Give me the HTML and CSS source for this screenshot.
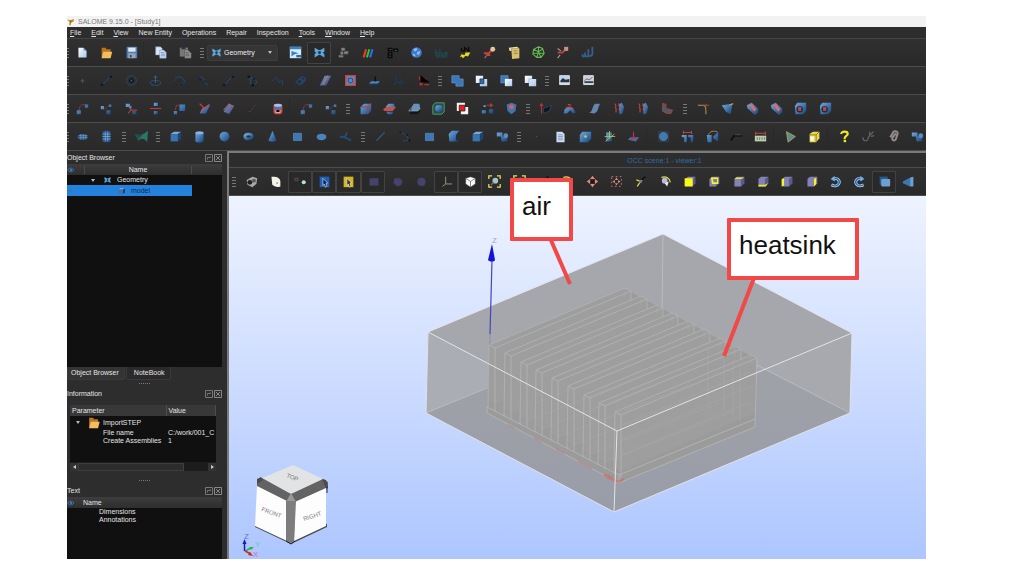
FILE: index.html
```html
<!DOCTYPE html>
<html lang="en">
<head>
<meta charset="utf-8">
<title>SALOME 9.15.0 - [Study1]</title>
<link rel="stylesheet" href="styles.css">
</head>
<body>
<svg class="sprite" aria-hidden="true">
<defs>
<linearGradient id="b" x1="0" y1="0" x2="1" y2="1"><stop offset="0" stop-color="#7aa6d4"/><stop offset=".5" stop-color="#3f79b6"/><stop offset="1" stop-color="#1c426e"/></linearGradient>
<linearGradient id="w" x1="0" y1="0" x2="1" y2="1"><stop offset="0" stop-color="#fff"/><stop offset="1" stop-color="#a9c8ea"/></linearGradient>
</defs>
<symbol id="new" viewBox="0 0 16 16"><path fill="url(#w)" d="M3 2h6l4 4v8H3z"/><path fill="#7fb0e8" d="M9 2l4 4H9z"/></symbol>
<symbol id="open" viewBox="0 0 16 16"><path fill="#b9741c" d="M2 2h5l1 2h5v10H2z"/><path fill="#f3bd62" d="M4 7h11l-2 8H2z"/></symbol>
<symbol id="save" viewBox="0 0 16 16"><path fill="#4c7fb8" d="M2 1h13v14H2z"/><path fill="#dfe8f2" d="M4 2h9v5H4z"/><path fill="#9aa4ae" d="M4 9h9v6H4z"/><path fill="#27456b" d="M6 11h2v3H6z"/></symbol>
<symbol id="copy" viewBox="0 0 16 16"><path fill="#d7e4f4" stroke="#7894b8" stroke-width=".6" d="M2 1h6l2 2v8H2z"/><path fill="#c9daf0" stroke="#7894b8" stroke-width=".6" d="M7 5h5l3 3v7H7z"/><path stroke="#6e93c0" d="M8.500 8h4m-4 2h5m-5 2h5"/></symbol>
<symbol id="paste" viewBox="0 0 16 16"><path fill="#777" d="M1 2h10v11H1z"/><path fill="#333" d="M3 1h5v3H3z"/><path fill="#999" stroke="#444" stroke-width=".6" d="M7 5h4l4 4v6H7z"/><path stroke="#555" d="M8 8h4m-4 2h5m-5 2h5"/></symbol>
<symbol id="geom" viewBox="0 0 16 16"><path fill="#5fa8d4" d="M2 2l5 3h2l5-3v5l-2 1 2 2v4l-5-3H7l-5 3v-4l2-2-2-1z"/><path fill="#16466c" d="M7 6h2l1 2-1 2H7L6 8z"/></symbol>
<symbol id="shaper" viewBox="0 0 16 16"><path fill="#d7ecfb" d="M1 1h14v14H1z"/><path fill="#3583c7" d="M1 1h14v3H1zM3 6l9 3-5 1-4 3z"/><path fill="#246ba8" d="M9 11h6v3H9z"/></symbol>
<symbol id="cubes" viewBox="0 0 16 16"><path fill="#858585" stroke="#333" stroke-width=".7" d="M5 2h5v5H5zM4 6h4v5H4zM8 6h6v4H8zM2 11h6v3H2z"/></symbol>
<symbol id="rgb" viewBox="0 0 16 16"><path stroke="#f33" stroke-width="2.500" d="M2 14l3-10"/><path stroke="#2c2" stroke-width="2.500" d="M6 14l3-10"/><path stroke="#36f" stroke-width="2.500" d="M10 14l3-10"/></symbol>
<symbol id="yacs" viewBox="0 0 16 16"><path fill="#0b0b0b" d="M2 2h6v4H2zM9 3h6v4H9zM2 7h6v8H2z"/><path fill="#933" d="M4 4h3v1H4zM4 9h2v1H4z"/><path fill="#285" d="M4 12h2v1H4zM11 5h2v1h-2z"/></symbol>
<symbol id="globe" viewBox="0 0 16 16"><circle cx="8" cy="8" r="6.500" fill="#3c78c8"/><path fill="#8ebce8" d="M4 4l4-2 1 3-3 2zM9 7l4-1-2 5-3-1zM3 9l3 1 1 3-3-1z"/></symbol>
<symbol id="blue" viewBox="0 0 16 16"><path fill="none" stroke="#1b5762" d="M1 4v8h3V8H1M6 4v8m2-4v4h3V8m4 4h-2V8h2v2h-2M1 13.500h14"/></symbol>
<symbol id="hex" viewBox="0 0 16 16"><path fill="none" stroke="#0a0a0a" stroke-width="1.500" d="M3 2v4h4V2l5 4V1"/><path fill="#e4dc1c" d="M1 14l2-4 4 1 1-3h6l-3 5-3-1-3 3-2-2z"/></symbol>
<symbol id="pipe" viewBox="0 0 16 16"><path fill="none" stroke="#777" stroke-width="1.500" d="M2 15l3-4"/><path fill="none" stroke="#c9403a" stroke-width="2.400" d="M1 9h6l4-4M4 11h5"/><circle cx="12" cy="4" r="3" fill="#e8c49a"/></symbol>
<symbol id="book" viewBox="0 0 16 16"><path fill="#d8c070" d="M4 3h10v12l-9 1z"/><path fill="#f2e3a4" d="M1 2l10-1 3 2H4v3H2z"/><path stroke="#8d7833" d="M7 6h4m-4 3h5"/></symbol>
<symbol id="mesh" viewBox="0 0 16 16"><path fill="#1c3a18" stroke="#6fb65c" stroke-width="1.300" d="M8 1l5 2 2 6-4 5H6L1 10l1-6zM8 1v6l5-3M2 4l6 3-2 7m2-7l3 7M1 9h13"/></symbol>
<symbol id="pipe2" viewBox="0 0 16 16"><path fill="none" stroke="#999" stroke-width="1.500" d="M2 3l4 3M2 15l3-4"/><path fill="none" stroke="#b9403c" stroke-width="2.200" d="M2 8h6l4-4"/><path fill="#c9907e" d="M10 1h5v5h-5z"/></symbol>
<symbol id="bars" viewBox="0 0 16 16"><path fill="none" stroke="#33608f" stroke-width="2.200" d="M2 10v2q1 2 3 0V8m1 4q2 2 3 0V4m1 8q3 1 4-2V1"/></symbol>
<symbol id="pt" viewBox="0 0 16 16"><path stroke="#4d6175" d="M8 6v5M5.500 8.500h5"/></symbol>
<symbol id="ln" viewBox="0 0 16 16"><path stroke="#244a74" stroke-width="1.200" d="M3 13l10-10"/><path fill="#0d1a2a" d="M1 12h3v3H1zM12 2h3v3h-3z"/></symbol>
<symbol id="circ" viewBox="0 0 16 16"><circle cx="8" cy="8" r="6" fill="none" stroke="#24507c"/><path stroke="#0b1624" stroke-width="2" d="M8 5v6M5 8h6"/><circle cx="8" cy="8" r="1" fill="#3a6da5"/></symbol>
<symbol id="ell" viewBox="0 0 16 16"><ellipse cx="8" cy="11" rx="6.500" ry="3" fill="none" stroke="#29568a"/><path fill="none" stroke="#3b6696" d="M8 11V3M6 5l2-3 2 3"/></symbol>
<symbol id="arc" viewBox="0 0 16 16"><path fill="none" stroke="#244f80" d="M2 7c4-6 12-4 12 3"/><path fill="#0c1826" stroke="#29568a" stroke-width=".5" d="M1 6h2v2H1zM13 10h2v2h-2zM8 12h3v3H8z"/></symbol>
<symbol id="crv" viewBox="0 0 16 16"><path fill="none" stroke="#29568a" d="M2 6c4-5 5 0 6 3s3 6 6 2"/><path fill="#13263d" d="M1 5h3v3H1zM7 8h2v2H7zM13 10h2v2h-2z"/></symbol>
<symbol id="poly" viewBox="0 0 16 16"><path fill="none" stroke="#29568a" d="M3 4l7 2 4 4-5 4-4-3 1-3z"/><path fill="#0b1624" d="M2 2h3v3H2zM9 5h2v2H9zM7 12h3v3H7z"/></symbol>
<symbol id="zig" viewBox="0 0 16 16"><path fill="none" stroke="#23466d" stroke-width="1.200" d="M1 9l5-5 4 6 4-2v6"/></symbol>
<symbol id="hatch" viewBox="0 0 16 16"><path fill="none" stroke="#23466d" stroke-width="1.500" d="M1 10l8-7 4 2-8 8zM4 6l8 3M6 13l7-6M7 4l3 8"/></symbol>
<symbol id="plate" viewBox="0 0 16 16"><path fill="url(#b)" d="M1 14l6-12h8L9 14z"/><path stroke="#d06060" stroke-width="2" d="M5 13l6-11"/></symbol>
<symbol id="redsq" viewBox="0 0 16 16"><path fill="#5a89bb" stroke="#d83c3c" stroke-width="1.500" d="M2 2h12v12H2z"/><circle cx="8" cy="8" r="3" fill="none" stroke="#1c3e66"/><path stroke="#d83c3c" d="M2 5h3m6 7h3"/></symbol>
<symbol id="plane" viewBox="0 0 16 16"><path fill="#4b86c0" d="M1 12l3-3h11l-3 3z"/><path fill="#183453" d="M1 12h11l3-3v2l-3 3H1z"/><path fill="#111" d="M8 3h2v6H8z"/></symbol>
<symbol id="axes" viewBox="0 0 16 16"><path fill="none" stroke="#1e3a58" stroke-width="1.500" d="M5 1v9h10M5 10l-3 4M10 5v9"/></symbol>
<symbol id="raxes" viewBox="0 0 16 16"><path fill="none" stroke="#c22a2a" stroke-width="1.500" d="M3 3v4M4 13l7-7M9 13h6"/><path fill="#c22a2a" d="M3 11h4v3H3z"/><path stroke="#0a0a0a" d="M5 2v8h10"/></symbol>
<symbol id="ov1" viewBox="0 0 16 16"><path fill="#3b78b8" stroke="#7cacdf" stroke-width=".6" d="M1 2h9v4h5v9H6v-4H1z"/></symbol>
<symbol id="ov2" viewBox="0 0 16 16"><path fill="url(#w)" d="M1 2h9v4h5v9H6v-4H1z"/><path fill="#2f6cab" stroke="#123" stroke-width=".7" d="M6 6h5v6H6z"/></symbol>
<symbol id="ov3" viewBox="0 0 16 16"><path fill="#3b78b8" stroke="#7cacdf" stroke-width=".6" d="M1 2h9v9H1z"/><path fill="url(#w)" d="M6 6h9v9H6z"/></symbol>
<symbol id="ov4" viewBox="0 0 16 16"><path fill="url(#w)" d="M1 2h9v4h5v9H6v-4H1z"/><path fill="none" stroke="#8ba2bd" stroke-width=".7" d="M6 11V6h4"/></symbol>
<symbol id="pic" viewBox="0 0 16 16"><path fill="#b9d4ee" stroke="#eee" d="M2 2h12v11H2z"/><path fill="#27333f" d="M3 8l3-3 3 2 5-1v4H3z"/><path fill="#ddd" d="M2 11h12v2H2z"/></symbol>
<symbol id="pic2" viewBox="0 0 16 16"><path fill="#c3d4e6" stroke="#eee" d="M2 2h12v11H2z"/><path fill="none" stroke="#a83030" d="M3 8l3-2 3 1 4-3"/><path fill="#27333f" d="M3 9h11v2H3z"/></symbol>
<symbol id="t1" viewBox="0 0 16 16"><path fill="none" stroke="#a83a3a" d="M4 10c0-5 2-7 7-7"/><path fill="url(#b)" d="M1 10h5v5H1zM11 3h4v4h-4z"/></symbol>
<symbol id="t2" viewBox="0 0 16 16"><path stroke="#a83a3a" d="M6 9l5-5" stroke-dasharray="2 1"/><path fill="url(#b)" d="M1 5h4v4H1zM8 10h5v5H8zM11 3h3v3h-3z"/></symbol>
<symbol id="t3" viewBox="0 0 16 16"><path fill="none" stroke="#b83a3a" stroke-width="1.300" d="M7 4v6h8M7 10l-3 4"/><path fill="url(#b)" d="M1 2h5v4H1zM5 5h3v3H5zM9 11h5v4H9z"/></symbol>
<symbol id="t4" viewBox="0 0 16 16"><path stroke="#b83a3a" stroke-width="1.500" d="M1 8h14"/><path fill="url(#b)" d="M6 1h5v4H6zM6 11h5v4H6z"/></symbol>
<symbol id="t5" viewBox="0 0 16 16"><path fill="url(#b)" d="M1 11h4v4H1zM8 3h7v8H8z"/><path fill="none" stroke="#a83a3a" d="M3 10l1-6h5"/></symbol>
<symbol id="t6" viewBox="0 0 16 16"><path fill="url(#b)" d="M2 14l3-6 10-5-5 11z"/><path fill="none" stroke="#c84848" stroke-width="1.500" d="M2 2l5 5-2 6M7 8l7-5"/></symbol>
<symbol id="t7" viewBox="0 0 16 16"><path fill="url(#b)" d="M2 12l7-10 6 3-6 10z"/><path fill="none" stroke="#c84848" stroke-width="1.500" d="M2 10l7-8M7 13l7-9"/></symbol>
<symbol id="t8" viewBox="0 0 16 16"><path fill="none" stroke="#1a2c40" stroke-width="2" d="M3 13c7 0 3-9 10-9"/><path fill="none" stroke="#7c3434" d="M3 12c7 0 3-8 10-8"/></symbol>
<symbol id="t9" viewBox="0 0 16 16"><rect x="3" y="2" width="11" height="13" rx="3" fill="#d84848"/><ellipse cx="8.500" cy="4" rx="5" ry="2" fill="#9fc6ec"/><path fill="#3c79b8" d="M4 6h9v3H4z"/><path stroke="#ecd5d5" d="M6 10v3h5v-3"/></symbol>
<symbol id="s1" viewBox="0 0 16 16"><path fill="url(#b)" d="M2 6l4-4h9v9l-4 4H2z"/><path fill="none" stroke="#b34040" stroke-width="1.300" d="M2 6h9v8M11 6l4-4"/></symbol>
<symbol id="s2" viewBox="0 0 16 16"><path fill="url(#b)" d="M4 5l3-3h6l2 4H4zM4 12h9l-2 3H6z"/><path fill="#c9504a" d="M0 9l4-3h12l-4 5H2z"/></symbol>
<symbol id="s3" viewBox="0 0 16 16"><path fill="#6990b8" d="M4 7l3-5h7l1 6-3 3H4z"/><path fill="none" stroke="#8fa8c2" d="M1 11l2-3m-2 3h11l3-3"/><path fill="#101820" d="M2 12h10l3-2v2l-3 3H3z"/></symbol>
<symbol id="s4" viewBox="0 0 16 16"><path fill="#2c4d46" stroke="#4a9c70" stroke-width="1.200" d="M1 4l3-3h11v11l-3 3H1z"/><rect x="4" y="4" width="9" height="8" rx="3" fill="url(#b)"/></symbol>
<symbol id="s5" viewBox="0 0 16 16"><path fill="#f2f2f2" d="M1 1h10v10H1zM6 6h9v9H6z"/><path fill="#f01818" stroke="#222" d="M4 4h7v7H4z"/></symbol>
<symbol id="s6" viewBox="0 0 16 16"><path fill="url(#b)" d="M1 10h5v4H1zM10 9h5v5h-5zM3 4h3v2H3z"/><path fill="none" stroke="#a83a3a" stroke-width="1.500" d="M7 4h6m-2-2l3 2-3 2"/></symbol>
<symbol id="s7" viewBox="0 0 16 16"><path fill="#3576bd" d="M2 3l6-2 6 2-1 8-5 4-5-4z"/><circle cx="8" cy="6" r="3" fill="#e85a4a"/></symbol>
<symbol id="c1" viewBox="0 0 16 16"><path fill="none" stroke="#b33" stroke-width="1.300" d="M3 2v12m-2-9l2-3 2 3"/><path fill="#101820" stroke="#395d85" stroke-width=".7" d="M5 8l10-4-2 7-7 3z"/></symbol>
<symbol id="c2" viewBox="0 0 16 16"><path fill="url(#b)" d="M1 14l1-5 6-3 5 3 3 4-4 1-3-4-4 4z"/><path fill="none" stroke="#c84848" stroke-width="1.500" d="M3 8c3-2 7-2 10 1M6 3l4 1"/></symbol>
<symbol id="c3" viewBox="0 0 16 16"><path fill="#6485ae" d="M1 13c5 0 4-9 8-11h6c-3 4-2 11-8 12z"/></symbol>
<symbol id="c4" viewBox="0 0 16 16"><path fill="url(#b)" d="M7 4c4 0 0 5 2 6v5l4-1 2-8-3-5z"/><path fill="none" stroke="#c84848" stroke-width="1.300" d="M3 2c4 2 0 4 2 6v5M8 2c4 2 1 5 1 9"/></symbol>
<symbol id="c5" viewBox="0 0 16 16"><path fill="#2d6871" stroke="#a33b3b" stroke-width="1.500" d="M2 2l4 1v5l8 2-2 4H7l-5-3z"/></symbol>
<symbol id="f1" viewBox="0 0 16 16"><path fill="none" stroke="#b0934a" stroke-width="1.300" d="M1 4h6c4 0 4 4 4 11"/><path fill="none" stroke="#aa5930" d="M6 4h9M11 2v6"/></symbol>
<symbol id="f2" viewBox="0 0 16 16"><path fill="url(#b)" d="M1 4l13-2-2 13-6-3z"/><path stroke="#d09050" stroke-width="1.500" d="M10 4l5-2"/></symbol>
<symbol id="f3" viewBox="0 0 16 16"><path fill="url(#b)" d="M1 4l6-3 8 7v5l-4 3-9-8z"/><path fill="#dd6b6b" d="M4 4l3-2 6 7-3 3z"/></symbol>
<symbol id="f4" viewBox="0 0 16 16"><path fill="url(#b)" d="M1 5l3-4h11v10l-4 4H2z"/><circle cx="7" cy="9" r="4" fill="#1e2c3e"/><path fill="#b74848" d="M5 6h4v5H5z"/></symbol>
<symbol id="m1" viewBox="0 0 16 16"><path fill="#234a75" d="M1 9l3-4h9l2 4-3 3H4z"/><path stroke="#7fa9d4" stroke-width=".8" d="M3 7h11M3 9.500h11M6 5v7m3-7v7m3-6v5"/></symbol>
<symbol id="m2" viewBox="0 0 16 16"><rect x="3" y="1" width="10" height="14" rx="2" fill="#275489"/><path stroke="#91b8df" stroke-width=".8" d="M3 5h10M3 8h10M3 11h10M6.500 2v12m3-12v12"/></symbol>
<symbol id="surf" viewBox="0 0 16 16"><path fill="#2a7767" d="M0 5c6 3 10 1 16-4l-1 14c-3-4-6-6-11-2z"/><path fill="#1b5148" d="M0 5l4 7 5-6z"/></symbol>
<symbol id="box" viewBox="0 0 16 16"><path fill="#7ea8d4" d="M2 5l4-3h9l-4 3z"/><path fill="#3b73ae" d="M2 5h9v9H2z"/><path fill="#1d4370" d="M11 5l4-3v9l-4 3z"/></symbol>
<symbol id="cyl" viewBox="0 0 16 16"><path fill="url(#b)" d="M3 3v11c3 2 7 2 10 0V3z"/><ellipse cx="8" cy="3.500" rx="5" ry="2" fill="#8ab3db"/></symbol>
<symbol id="sph" viewBox="0 0 16 16"><circle cx="8" cy="8" r="6" fill="url(#b)"/></symbol>
<symbol id="tor" viewBox="0 0 16 16"><ellipse cx="8" cy="8" rx="4.500" ry="3" fill="none" stroke="url(#b)" stroke-width="3.500"/></symbol>
<symbol id="cone" viewBox="0 0 16 16"><path fill="url(#b)" d="M8 1l5 12c-3 2-7 2-10 0z"/></symbol>
<symbol id="sq" viewBox="0 0 16 16"><path fill="#3c78b5" stroke="#6ba2d8" stroke-width=".6" d="M3 4h10v9H3z"/></symbol>
<symbol id="disk" viewBox="0 0 16 16"><ellipse cx="8" cy="8.500" rx="6" ry="4" fill="#4a82bf"/></symbol>
<symbol id="tee" viewBox="0 0 16 16"><path fill="none" stroke="#1f4f7c" stroke-width="2.200" d="M1 8l6 1 8 4M7 9l3-6"/></symbol>
<symbol id="seg" viewBox="0 0 16 16"><path stroke="#285f94" stroke-width="1.500" d="M3 13L13 3"/></symbol>
<symbol id="wire" viewBox="0 0 16 16"><path fill="none" stroke="#285070" d="M3 3l7 3 3 6-7 2"/><path fill="#0b1624" d="M2 2h2v2H2zM10 5h2v2h-2zM13 11h2v3h-2z"/></symbol>
<symbol id="shell" viewBox="0 0 16 16"><path fill="url(#b)" d="M2 5l4-4h9l-3 4v7l3 2H3z"/><path fill="#1a2f48" d="M11 6l3-2-2 7 3 2h-4z"/></symbol>
<symbol id="comp" viewBox="0 0 16 16"><path fill="url(#b)" d="M1 3h7v5H1zM6 8h8v6H7z"/><circle cx="12" cy="7" r="3" fill="#5b8dc0"/></symbol>
<symbol id="dot" viewBox="0 0 16 16"><circle cx="8" cy="8" r="1" fill="#28588a"/></symbol>
<symbol id="doc" viewBox="0 0 16 16"><path fill="#cfdcf0" d="M3 2h7l3 3v10H3z"/><path stroke="#5a84b5" stroke-width=".8" d="M5 6h6m-6 2h6m-6 2h6m-6 2h6"/></symbol>
<symbol id="boxp" viewBox="0 0 16 16"><path fill="url(#b)" d="M1 6l3-4h11v9l-4 4H1z"/><circle cx="8" cy="8" r="1.500" fill="#d8d23a"/></symbol>
<symbol id="gaxes" viewBox="0 0 16 16"><path fill="url(#b)" d="M4 3h7v11H4z"/><path fill="none" stroke="#b6c744" d="M8 1v9M2 8h13M3 14l11-9"/></symbol>
<symbol id="vec" viewBox="0 0 16 16"><path fill="#3b73a8" d="M1 12l3-3h11l-4 5z"/><path fill="none" stroke="#c93048" stroke-width="1.400" d="M8 11V2m-4 8h8"/></symbol>
<symbol id="bnd" viewBox="0 0 16 16"><path fill="none" stroke="#3f4b57" stroke-width=".8" d="M2 2h12v12H2z"/><circle cx="8" cy="8" r="5.500" fill="#4079b4"/></symbol>
<symbol id="dist" viewBox="0 0 16 16"><path fill="url(#b)" d="M1 6h6v9H4V9H1zM9 6h6v9h-3V9H9z"/><path stroke="#b94545" stroke-width="1.300" d="M3 3h10M3 1v4m10-4v4"/></symbol>
<symbol id="ang" viewBox="0 0 16 16"><path fill="url(#b)" d="M1 6h6v9H2zM9 8l6-6v12l-6-4z"/><path fill="none" stroke="#c09440" d="M3 6c2-5 6-5 11-4"/></symbol>
<symbol id="step" viewBox="0 0 16 16"><path fill="none" stroke="#0c0c0c" stroke-width="2" d="M1 13l4-6h10"/><path stroke="#555" d="M6 6h8"/></symbol>
<symbol id="rule" viewBox="0 0 16 16"><path stroke="#c94545" stroke-width="1.300" d="M2 4h12M2 2v4m12-4v4"/><path fill="#bccfae" d="M1 7h14v7H1z"/><path stroke="#4b6a3c" d="M4 9v3m3-3v3m3-3v3m3-3v3"/></symbol>
<symbol id="play" viewBox="0 0 16 16"><path fill="#668c78" stroke="#c0c266" stroke-width=".8" d="M3 2l11 6-9 7z"/><path fill="#5c87b8" d="M5 8h6l-6 5z"/></symbol>
<symbol id="ycube" viewBox="0 0 16 16"><path fill="#e2de50" d="M2 5l4-3h8v8l-4 5H2z"/><path fill="#fff" d="M3 8h4v5H3z"/><path fill="none" stroke="#7b3b20" stroke-width=".8" d="M2 6h8v9M10 6l4-4"/></symbol>
<symbol id="help" viewBox="0 0 16 16"><path fill="none" stroke="#f0ea20" stroke-width="2.600" d="M4 5c0-4 8-4 8 0 0 2-4 2-4 6"/><path fill="#f0ea20" d="M7 12h3v3H7z"/></symbol>
<symbol id="wr" viewBox="0 0 16 16"><path fill="none" stroke="#666" stroke-width="1.500" d="M14 2l-7 8M10 2l-1 4M15 7l-4 1M1 9c0 5 5 6 7 1"/></symbol>
<symbol id="clip" viewBox="0 0 16 16"><path fill="none" stroke="#928a88" stroke-width="2.500" d="M11 4L7 9c-2 3 2 6 4 2l2-6c1-4-5-5-6-1l-3 5"/></symbol>
<symbol id="cam" viewBox="0 0 16 16"><path fill="#a8a8a8" d="M2 6l7-4 6 2-1 7-5 4-6-3z"/><circle cx="6" cy="9" r="3" fill="#222"/><path fill="#555" d="M9 5h4v4H9z"/></symbol>
<symbol id="blob" viewBox="0 0 16 16"><path fill="#f3f1e8" d="M3 2h4q7 1 7 6v6q-6 2-10-2z"/><circle cx="10" cy="10" r="1" fill="#888"/></symbol>
<symbol id="hl" viewBox="0 0 16 16"><path fill="none" stroke="#666" stroke-width=".8" d="M1 4h4v3H1z"/><circle cx="12" cy="9" r="2.500" fill="#b6dfd6"/></symbol>
<symbol id="selb" viewBox="0 0 16 16"><path fill="#1e5fbb" d="M2 2h12v13H2z"/><path fill="#102040" stroke="#d7e4fb" stroke-width=".8" d="M6 4l6 6h-2l1 4-2 1-1-4-2 2z"/></symbol>
<symbol id="sely" viewBox="0 0 16 16"><path fill="#d4b51e" d="M2 2h12v13H2z"/><path fill="#263052" stroke="#fff4c2" stroke-width=".8" d="M6 4l6 6h-2l1 4-2 1-1-4-2 2z"/></symbol>
<symbol id="prec" viewBox="0 0 16 16"><path fill="#45436a" d="M3 4h11v9H3z"/></symbol>
<symbol id="ppol" viewBox="0 0 16 16"><path fill="#45436a" d="M4 4h7l3 3-1 5-5 2-5-4z"/></symbol>
<symbol id="pcir" viewBox="0 0 16 16"><circle cx="8" cy="8.500" r="5" fill="#45436a"/></symbol>
<symbol id="trih" viewBox="0 0 16 16"><path fill="none" stroke="#a9a98e" d="M7 2v9h8M7 11l-4 3"/></symbol>
<symbol id="wcube" viewBox="0 0 16 16"><path fill="#fafafa" stroke="#333" stroke-width=".7" d="M8 2l6 2v7l-6 4-6-4V4z"/><path fill="none" stroke="#444" stroke-width=".8" d="M2 4l6 4 6-4M8 8v7"/></symbol>
<symbol id="fit" viewBox="0 0 16 16"><path fill="none" stroke="#e9e25a" stroke-width="1.500" d="M1 5V1h4m6 0h4v4m0 6v4h-4m-6 0H1v-4"/><circle cx="9" cy="7" r="3.500" fill="#a9c3c8"/><path stroke="#777" stroke-width="1.500" d="M7 9l-3 3"/></symbol>
<symbol id="pan" viewBox="0 0 16 16"><path fill="#e8877a" d="M8 1l3 4H5zM8 15l3-4H5zM1 8l4-3v6zM15 8l-4-3v6z"/><path fill="#1c1c1c" d="M6 6h4v4H6z"/></symbol>
<symbol id="gpan" viewBox="0 0 16 16"><path fill="none" stroke="#d88a7a" stroke-dasharray="2 3" d="M2 2h12v12H2z"/><path fill="#e08878" d="M8 3l2 3H6zM8 13l2-3H6zM3 8l3-2v4zM13 8l-3-2v4z"/></symbol>
<symbol id="rotp" viewBox="0 0 16 16"><path fill="none" stroke="#e5dc43" stroke-width="1.500" d="M3 6l5 2 2-2M8 8l-4 6"/><path stroke="#111" stroke-width="2" d="M9 6l5-4"/><circle cx="8" cy="8" r="2" fill="#6f7f8d"/></symbol>
<symbol id="rotv" viewBox="0 0 16 16"><path fill="none" stroke="#e5dc43" stroke-width="1.500" d="M3 3c5-2 10 0 11 6"/><circle cx="7" cy="7" r="3.500" fill="#bcb9df"/><path fill="#efefef" d="M7 10l5-2-2 6z"/></symbol>
<symbol id="vb" viewBox="0 0 16 16"><path fill="#8581b4" d="M3 5l3-3h9v8l-4 4H3z"/><path fill="#5c5890" d="M11 5l4-3v8l-4 4z"/></symbol>
<symbol id="v1" viewBox="0 0 16 16"><use href="#vb"/><path fill="#f8f81a" d="M2 4h10v10H2z"/></symbol>
<symbol id="v2" viewBox="0 0 16 16"><use href="#vb"/><path fill="none" stroke="#f5f52a" stroke-width="2" d="M6 4h7v6H7z"/></symbol>
<symbol id="v3" viewBox="0 0 16 16"><use href="#vb"/><path fill="#e6e62a" d="M3 5l2-2h10l-3 2z"/></symbol>
<symbol id="v4" viewBox="0 0 16 16"><use href="#vb"/><path fill="#e6e62a" d="M3 12h8l4-2-3 4H3z"/></symbol>
<symbol id="v5" viewBox="0 0 16 16"><use href="#vb"/><path fill="#f5f52a" d="M2 5l3-1v9l-3 1z"/></symbol>
<symbol id="v6" viewBox="0 0 16 16"><use href="#vb"/><path fill="#f5f52a" d="M11 5l3-2v8l-3 3z"/></symbol>
<symbol id="ccw" viewBox="0 0 16 16"><path fill="none" stroke="#b7dbf7" stroke-width="3.500" d="M5 5c6-2 9 2 7 6-2 3-6 3-9 1"/><path fill="none" stroke="#2d6cac" stroke-width="1.800" d="M5 5c6-2 9 2 7 6-2 3-6 3-9 1"/><path fill="#6db0ea" d="M7 1v7L2 5z"/></symbol>
<symbol id="cw" viewBox="0 0 16 16"><path fill="none" stroke="#b7dbf7" stroke-width="3.500" d="M11 5c-6-2-9 2-7 6 2 3 6 3 9 1"/><path fill="none" stroke="#2d6cac" stroke-width="1.800" d="M11 5c-6-2-9 2-7 6 2 3 6 3 9 1"/><path fill="#6db0ea" d="M9 1v7l5-3z"/></symbol>
<symbol id="orth" viewBox="0 0 16 16"><path fill="#2b5a8c" d="M2 2h10v10H2z"/><rect x="4" y="5" width="11" height="9" rx="1" fill="#6ea0d0"/></symbol>
<symbol id="persp" viewBox="0 0 16 16"><path fill="#3c77b3" d="M1 8l9-5v11l-9-4z"/><path fill="#6ea0d0" d="M10 3l4-1v12h-4z"/></symbol>
<symbol id="eye" viewBox="0 0 16 16"><path fill="none" stroke="#3d76b0" stroke-width="1.800" d="M1 8c4-5 9-5 13 0-4 5-9 5-13 0z"/><circle cx="8" cy="8" r="2.500" fill="#3d76b0"/></symbol>
<symbol id="dockbtn" viewBox="0 0 8 8"><path fill="none" stroke="#777" d="M.5.500h7v7h-7zM2.500 5.500v-2h3v-1"/></symbol>
<symbol id="dockx" viewBox="0 0 8 8"><path fill="none" stroke="#888" d="M.5.500h7v7h-7zM2 2l4 4m0-4L2 6"/></symbol>
<symbol id="logo" viewBox="0 0 16 16"><path fill="#b88a2a" d="M0 2l7 2 9-3-1 6-5 2-2 7-3-1 1-7z"/><path fill="#5b4a26" d="M7 5l3 1-3 3z"/></symbol>
</svg>

<div class="app">
<header class="titlebar"><svg><use href="#logo"/></svg><span>SALOME 9.15.0 - [Study1]</span></header>
<nav class="menubar">
<button><u>F</u>ile</button><button><u>E</u>dit</button><button><u>V</u>iew</button><button>New Entity</button><button>Operations</button><button>Repair</button><button>Inspection</button><button><u>T</u>ools</button><button><u>W</u>indow</button><button><u>H</u>elp</button>
</nav>

<div class="toolbar">
<div class="group first"><i class="grip"></i><button aria-label="New"><svg><use href="#new"/></svg></button><button aria-label="Open"><svg><use href="#open"/></svg></button><button aria-label="Save"><svg><use href="#save"/></svg></button><i class="sep"></i><button aria-label="Copy"><svg><use href="#copy"/></svg></button><button aria-label="Paste"><svg><use href="#paste"/></svg></button></div>
<div class="group"><i class="grip"></i><label class="combo"><svg><use href="#geom"/></svg><select aria-label="Module"><option>Geometry</option></select><i class="caret"></i></label><i class="sep"></i><button aria-label="Shaper"><svg><use href="#shaper"/></svg></button><button class="on" aria-label="Geometry"><svg><use href="#geom"/></svg></button><button aria-label="Mesh"><svg><use href="#cubes"/></svg></button><button aria-label="Fields"><svg><use href="#rgb"/></svg></button><button aria-label="YACS"><svg><use href="#yacs"/></svg></button><button aria-label="Globe"><svg><use href="#globe"/></svg></button><button aria-label="Blue"><svg><use href="#blue"/></svg></button><button aria-label="Hexa"><svg><use href="#hex"/></svg></button><button aria-label="Pipe"><svg><use href="#pipe"/></svg></button><button aria-label="Catalogue"><svg><use href="#book"/></svg></button><button aria-label="Homard"><svg><use href="#mesh"/></svg></button><button aria-label="Job"><svg><use href="#pipe2"/></svg></button><button aria-label="Statistics"><svg><use href="#bars"/></svg></button></div>
</div>

<div class="toolbar">
<div class="group first"><i class="grip"></i><button aria-label="Point"><svg><use href="#pt"/></svg></button><button aria-label="Line"><svg><use href="#ln"/></svg></button><button aria-label="Circle"><svg><use href="#circ"/></svg></button><button aria-label="Ellipse"><svg><use href="#ell"/></svg></button><button aria-label="Arc"><svg><use href="#arc"/></svg></button><button aria-label="Curve"><svg><use href="#crv"/></svg></button><button aria-label="Vector"><svg><use href="#ln"/></svg></button><button aria-label="Polyline"><svg><use href="#poly"/></svg></button><button aria-label="Sketch"><svg><use href="#zig"/></svg></button><button aria-label="3D sketch"><svg><use href="#hatch"/></svg></button><button aria-label="Isoline"><svg><use href="#plate"/></svg></button><button aria-label="Surface"><svg><use href="#redsq"/></svg></button><button aria-label="Plane"><svg><use href="#plane"/></svg></button><button aria-label="Local axes"><svg><use href="#axes"/></svg></button><button aria-label="Origin"><svg><use href="#raxes"/></svg></button></div>
<div class="group"><i class="grip"></i><button aria-label="Fuse"><svg><use href="#ov1"/></svg></button><button aria-label="Common"><svg><use href="#ov2"/></svg></button><button aria-label="Cut"><svg><use href="#ov3"/></svg></button><button aria-label="Section"><svg><use href="#ov4"/></svg></button></div>
<div class="group"><i class="grip"></i><button aria-label="Import picture"><svg><use href="#pic"/></svg></button><button aria-label="Feature detection"><svg><use href="#pic2"/></svg></button></div>
</div>

<div class="toolbar">
<div class="group first"><i class="grip"></i><button aria-label="Translate"><svg><use href="#t1"/></svg></button><button aria-label="Rotate"><svg><use href="#t2"/></svg></button><button aria-label="Location"><svg><use href="#t3"/></svg></button><button aria-label="Mirror"><svg><use href="#t4"/></svg></button><button aria-label="Scale"><svg><use href="#t5"/></svg></button><button aria-label="Offset"><svg><use href="#t6"/></svg></button><button aria-label="Project"><svg><use href="#t7"/></svg></button><button aria-label="Extend"><svg><use href="#t8"/></svg></button><button aria-label="Cylinder projection"><svg><use href="#t9"/></svg></button><i class="sep"></i><button aria-label="Multi translate"><svg><use href="#t1"/></svg></button><button aria-label="Multi rotate"><svg><use href="#t2"/></svg></button></div>
<div class="group"><i class="grip"></i><button aria-label="Explode"><svg><use href="#s1"/></svg></button><button aria-label="Partition"><svg><use href="#s2"/></svg></button><button aria-label="Archimede"><svg><use href="#s3"/></svg></button><button aria-label="Shapes on shape"><svg><use href="#s4"/></svg></button><button aria-label="Shared shapes"><svg><use href="#s5"/></svg></button><button aria-label="Transfer"><svg><use href="#s6"/></svg></button><button aria-label="Restore"><svg><use href="#s7"/></svg></button></div>
<div class="group"><i class="grip"></i><button aria-label="Extrusion"><svg><use href="#c1"/></svg></button><button aria-label="Revolution"><svg><use href="#c2"/></svg></button><button aria-label="Filling"><svg><use href="#c3"/></svg></button><button aria-label="Pipe path"><svg><use href="#c4"/></svg></button><button aria-label="Pipe sections"><svg><use href="#c4"/></svg></button><button aria-label="Thickness"><svg><use href="#c5"/></svg></button></div>
<div class="group"><i class="grip wider"></i><button aria-label="Fillet 1D"><svg><use href="#f1"/></svg></button><button aria-label="Fillet 2D"><svg><use href="#f2"/></svg></button><button aria-label="Fillet 3D"><svg><use href="#f3"/></svg></button><button aria-label="Chamfer"><svg><use href="#f3"/></svg></button><button aria-label="Extruded boss"><svg><use href="#f4"/></svg></button><button aria-label="Extruded cut"><svg><use href="#f4"/></svg></button></div>
</div>

<div class="toolbar">
<div class="group first"><i class="grip"></i><button aria-label="Quadrangle"><svg><use href="#m1"/></svg></button><button aria-label="Hexahedral"><svg><use href="#m2"/></svg></button></div>
<div class="group"><i class="grip"></i><button aria-label="Smoothing surface"><svg><use href="#surf"/></svg></button></div>
<div class="group"><i class="grip"></i><button aria-label="Box"><svg><use href="#box"/></svg></button><button aria-label="Cylinder"><svg><use href="#cyl"/></svg></button><button aria-label="Sphere"><svg><use href="#sph"/></svg></button><button aria-label="Torus"><svg><use href="#tor"/></svg></button><button aria-label="Cone"><svg><use href="#cone"/></svg></button><button aria-label="Rectangle"><svg><use href="#sq"/></svg></button><button aria-label="Disk"><svg><use href="#disk"/></svg></button><button aria-label="T-shape"><svg><use href="#tee"/></svg></button></div>
<div class="group"><i class="grip"></i><button aria-label="Edge"><svg><use href="#seg"/></svg></button><button aria-label="Wire"><svg><use href="#wire"/></svg></button><button aria-label="Face"><svg><use href="#sq"/></svg></button><button aria-label="Shell"><svg><use href="#shell"/></svg></button><button aria-label="Solid"><svg><use href="#box"/></svg></button><button aria-label="Compound"><svg><use href="#comp"/></svg></button></div>
<div class="group"><i class="grip"></i><button aria-label="Coordinates"><svg><use href="#dot"/></svg></button><button aria-label="Properties"><svg><use href="#doc"/></svg></button><button aria-label="Centre of mass"><svg><use href="#boxp"/></svg></button><button aria-label="Inertia"><svg><use href="#gaxes"/></svg></button><button aria-label="Normal"><svg><use href="#vec"/></svg></button><i class="sep"></i><button aria-label="Bounding box"><svg><use href="#bnd"/></svg></button><button aria-label="Distance"><svg><use href="#dist"/></svg></button><button aria-label="Angle"><svg><use href="#ang"/></svg></button><button aria-label="Tolerance"><svg><use href="#step"/></svg></button><button aria-label="Dimensions"><svg><use href="#rule"/></svg></button><i class="sep"></i><button aria-label="Free boundaries"><svg><use href="#play"/></svg></button><button aria-label="Free faces"><svg><use href="#ycube"/></svg></button><i class="sep"></i><button aria-label="What is"><svg><use href="#help"/></svg></button><button aria-label="Check shape"><svg><use href="#wr"/></svg></button><button aria-label="Self intersections"><svg><use href="#clip"/></svg></button><button aria-label="Compound check"><svg><use href="#comp"/></svg></button></div>
</div>

<main class="main">
<aside class="docks">
<section class="dock browser">
<h2 class="docktitle"><span>Object Browser</span><button aria-label="Float"><svg><use href="#dockbtn"/></svg></button><button aria-label="Close"><svg><use href="#dockx"/></svg></button></h2>
<div class="head"><span class="eyecol"><svg><use href="#eye"/></svg></span><span class="namecol">Name</span></div>
<ul class="tree">
<li class="row"><i class="arrow"></i><svg><use href="#geom"/></svg>Geometry</li>
<li class="row picked"><svg class="vis"><use href="#eye"/></svg><svg><use href="#box"/></svg>model</li>
</ul>
</section>
<div class="tabs"><button class="tab current">Object Browser</button><button class="tab">NoteBook</button></div>
<div class="split"></div>
<section class="dock">
<h2 class="docktitle"><span>Information</span><button aria-label="Float"><svg><use href="#dockbtn"/></svg></button><button aria-label="Close"><svg><use href="#dockx"/></svg></button></h2>
<div class="info">
<table>
<thead><tr><th>Parameter</th><th>Value</th></tr></thead>
<tbody>
<tr class="op"><td colspan="2"><span><i class="arrow"></i><svg><use href="#open"/></svg>ImportSTEP</span></td></tr>
<tr><td>File name</td><td>C:/work/001_C</td></tr>
<tr><td>Create Assemblies</td><td>1</td></tr>
</tbody>
</table>
<div class="hscroll"><button class="left" aria-label="Scroll left"></button><span></span><button class="right" aria-label="Scroll right"></button></div>
</div>
</section>
<div class="split"></div>
<section class="dock">
<h2 class="docktitle"><span>Text</span><button aria-label="Float"><svg><use href="#dockbtn"/></svg></button><button aria-label="Close"><svg><use href="#dockx"/></svg></button></h2>
<div class="head wide"><svg><use href="#eye"/></svg><span>Name</span></div>
<ul class="tree texts"><li>Dimensions</li><li>Annotations</li></ul>
</section>
</aside>

<section class="viewer">
<h2 class="viewtitle">OCC scene:1 - viewer:1</h2>
<div class="toolbar viewbar">
<div class="group"><i class="grip"></i><button aria-label="Dump view"><svg><use href="#cam"/></svg></button><button aria-label="Interaction style"><svg><use href="#blob"/></svg></button><button class="on" aria-label="Preselection"><svg><use href="#hl"/></svg></button><button class="on" aria-label="Selection"><svg><use href="#selb"/></svg></button><button class="on" aria-label="Highlight"><svg><use href="#sely"/></svg></button><button class="on" aria-label="Rectangle selection"><svg><use href="#prec"/></svg></button><button aria-label="Polygon selection"><svg><use href="#ppol"/></svg></button><button aria-label="Circle selection"><svg><use href="#pcir"/></svg></button><button class="on" aria-label="Trihedron"><svg><use href="#trih"/></svg></button><button class="on" aria-label="View cube"><svg><use href="#wcube"/></svg></button><button aria-label="Fit all"><svg><use href="#fit"/></svg></button><button aria-label="Fit area"><svg><use href="#fit"/></svg></button><button aria-label="Fit selection"><svg><use href="#rotp"/></svg></button><button aria-label="Zoom"><svg><use href="#rotv"/></svg></button><button aria-label="Pan"><svg><use href="#pan"/></svg></button><button aria-label="Global pan"><svg><use href="#gpan"/></svg></button><button aria-label="Rotation point"><svg><use href="#rotp"/></svg></button><button aria-label="Rotation"><svg><use href="#rotv"/></svg></button><button aria-label="Front"><svg><use href="#v1"/></svg></button><button aria-label="Back"><svg><use href="#v2"/></svg></button><button aria-label="Top"><svg><use href="#v3"/></svg></button><button aria-label="Bottom"><svg><use href="#v4"/></svg></button><button aria-label="Left"><svg><use href="#v5"/></svg></button><button aria-label="Right"><svg><use href="#v6"/></svg></button><button aria-label="Rotate counterclockwise"><svg><use href="#ccw"/></svg></button><button aria-label="Rotate clockwise"><svg><use href="#cw"/></svg></button><button class="on" aria-label="Orthographic"><svg><use href="#orth"/></svg></button><button aria-label="Perspective"><svg><use href="#persp"/></svg></button></div>
</div>
<div class="scene">
<svg viewBox="229 196 697 363" preserveAspectRatio="xMidYMid slice" role="img" aria-label="Heatsink inside an air box">
<defs>
<linearGradient id="floor" x1="0" y1="0" x2="0" y2="1"><stop offset="0" stop-color="#a2a3a8"/><stop offset="1" stop-color="#999da8"/></linearGradient>
<g id="fin">
<path fill="#9e9e9e" d="M489 345L625 288L631 291V345L495 404L488 400Z"/>
<path fill="none" stroke="#b3b5b3" stroke-width=".8" d="M488 407L489 345L625 288L631 291V301M489 345L495 348L631 291M495 348V411"/>
<path fill="none" stroke="#b3b5b3" stroke-opacity=".5" stroke-width=".7" d="M625 289V297"/>
</g>
</defs>
<path fill="#a5a7ac" d="M428 332L663 234L852 333L850 413L614 512L426 413Z"/>
<path fill="url(#floor)" d="M426 413L662 316L850 413L614 512Z"/>
<path fill="#abadb5" d="M428 332L540 391L487 387L426 413Z"/>
<path fill="#a9acb2" fill-opacity=".5" d="M852 333L850 413L757 365L757 372Z"/>
<path fill="none" stroke="#c0c2c5" stroke-width=".8" d="M663 234L662 316L850 413M426 413L662 316"/>
<path fill="#9b9b9b" d="M489 346L625 289L751 356L757 359L755 427L619 483L487 413Z"/>
<g><use href="#fin"/><use href="#fin" x="16" y="8"/><use href="#fin" x="32" y="17"/><use href="#fin" x="47" y="25"/><use href="#fin" x="63" y="33"/><use href="#fin" x="79" y="41"/><use href="#fin" x="95" y="50"/><use href="#fin" x="110" y="58"/><use href="#fin" x="126" y="67"/></g>
<path fill="none" stroke="#adafad" stroke-width=".6" stroke-opacity=".6" d="M504 416L640 362M520 424L656 370M535 432L671 378M551 440L687 386M567 448L703 394M583 457L719 403M598 465L734 411M621 425L750 372M621 440L750 387M621 455L750 402M708 346V402M724 354V410M733 360V416M740 362V422"/>
<path fill="none" stroke="#b6b8b6" stroke-width=".8" d="M487 407V413L619 483L755 427L757 359M487 407L619 475L755 419M619 475V483"/>
<path fill="none" stroke="#c97777" stroke-width="1.200" stroke-opacity=".6" d="M508 425l6 3M534 438l7 4M556 449l9 5M578 461l14 8"/>
<path fill="none" stroke="#d26a66" stroke-width="2" stroke-opacity=".7" d="M604 474c4 5 8 6 16 8M607 475l6 4M619 482l5-3"/>
<path fill="none" stroke="#e3e4e6" stroke-width="1" d="M428 332L663 234L852 333L850 413L614 512L426 413ZM428 332L617 431L852 333M617 431L614 512"/>
<path stroke="#4446c0" stroke-width="1.200" d="M492 260L490 334"/><path stroke="#8889b0" stroke-width=".8" d="M490 334v11"/>
<path fill="#1212d8" d="M492 244L488 260C490 262 494 262 495 260Z"/>
<text class="axis" x="492" y="243" fill="#a3a2cf">Z</text>
<path fill="#e2e3e5" d="M293 465L325 480L292 495L260 479Z"/>
<path fill="#636363" d="M257 481L262 478L291 494L287 502L257 487ZM291 494L323 479L328 482V488L295 502Z"/>
<path fill="#4b4b4b" d="M257 479l4-2 2 3-6 4zM322 479l4 1 2 7-2 1zM255 527L291 544L327 527V524H255Z"/>
<path fill="#fdfdfd" d="M257 486L287 501V541L255 526ZM295 502L326 488V526L294 541Z"/>
<path fill="#7d7d7d" d="M286 501L291 493L296 501L294 542L290 544L286 541Z"/>
<path fill="#999" d="M287 501L291 493L295 501Z"/>
<path fill="none" stroke="#1b2432" d="M327 487V493M286 541L291 544L295 541"/>
<text class="face" x="286" y="477" transform="rotate(22 286 477)">TOP</text>
<text class="face" x="261" y="511" transform="rotate(20 261 511)">FRONT</text>
<text class="face" x="304" y="521" transform="rotate(-18 304 521)">RIGHT</text>
<path stroke="#1a1ab8" stroke-width="1.500" d="M244.500 551V543"/><path fill="#1a1ab8" d="M244.500 539l2 5h-4z"/>
<path stroke="#2bb54a" stroke-width="1.500" d="M245 551l6-3"/><path fill="#2bb54a" d="M254 547l-5 0 2 3z"/>
<path stroke="#d42222" stroke-width="1.500" d="M245 551l6 3"/><path fill="#d42222" d="M253 556l-5-1 2-3z"/>
<text class="axis" x="244" y="539" fill="#6e70d8">Z</text><text class="axis" x="255" y="547" fill="#5fd0a0">Y</text><text class="axis" x="253" y="557" fill="#dc6e9c">X</text>
<path stroke="#f24848" stroke-width="4" d="M550 238L570 284M754 278L724 356"/>
</svg>
</div>
<div class="callout air">air</div>
<div class="callout heatsink">heatsink</div>
</section>
</main>
</div>
</body>
</html>
```
FILE: styles.css
```css
* { box-sizing: border-box; }
body { margin: 0; min-height: 100vh; padding: 16px 98px 17px 67px; display: flex; background: #fff; font: 7px/8px "Liberation Sans", Arial, sans-serif; color: #e4e4e4; }
button { font: inherit; color: inherit; background: none; border: 0; padding: 0; }
h2, ul { margin: 0; padding: 0; font: inherit; list-style: none; }
.sprite { position: absolute; width: 0; height: 0; }
.app { flex: 1; min-width: 0; display: flex; flex-direction: column; background: #2d2d2d; overflow: hidden; }
.titlebar { display: flex; align-items: center; gap: 4px; height: 11px; background: #f2f2f2; color: #777; }
.titlebar svg { width: 7px; height: 8px; }
.menubar { display: flex; gap: 10px; height: 12px; padding-left: 3px; white-space: nowrap; border-bottom: 1px solid #444; }

.toolbar { display: flex; height: 28px; border-bottom: 1px solid #4c4c4c; background: linear-gradient(#303030, #292929); overflow: hidden; }
.group { display: flex; align-items: center; flex: none; }
.group button { width: 24px; height: 22px; display: grid; place-items: center; border-radius: 1px; }
.group button:nth-child(3n) { width: 25px; }
.group button svg { width: 13px; height: 13px; display: block; }
.group .on { border: 1px solid #424242; background: #292929; }
.grip { flex: none; width: 10px; height: 12px; background: radial-gradient(circle, #777 35%, transparent 50%) 4px 0 / 2px 3px repeat; background-clip: content-box; padding: 0 3px; }
.grip.wider { width: 12px; padding: 0 4px; }
.first .grip { width: 3px; padding: 0 1px 0 0; background-position: 0 0; }
.sep { flex: none; width: 5px; height: 22px; border-left: 1px solid #292929; }
.combo { display: flex; align-items: center; width: 71px; height: 16px; padding: 0 5px 0 3px; border: 1px solid #3d3d3d; border-radius: 2px; background: #353535; }
.combo svg { width: 11px; height: 11px; }
.combo select { flex: 1; min-width: 0; margin-left: 2px; padding: 0; border: 0; appearance: none; background: none; font: inherit; color: #eee; }
.caret, .arrow { width: 0; height: 0; border: 2px solid transparent; border-top: 3px solid #bbb; border-bottom: 0; }

.main { flex: 1; display: flex; min-height: 0; }
.docks { flex: none; width: 160px; padding-right: 5px; display: flex; flex-direction: column; }
.dock { display: flex; flex-direction: column; }
.browser { flex: 1; }
.docktitle { display: flex; align-items: center; gap: 1px; height: 13px; }
.docktitle span { flex: 1; }
.docktitle button, .docktitle svg { width: 8px; height: 8px; display: block; }
.head { display: flex; align-items: center; height: 11px; background: linear-gradient(#3d3d3d, #2e2e2e); }
.head svg { width: 8px; height: 8px; display: block; }
.eyecol { width: 17px; }
.namecol { width: 108px; text-align: center; border: solid #4c4c4c; border-width: 0 1px; }
.wide { gap: 8px; }
.tree { flex: 1; background: #101010; }
.row { display: flex; align-items: center; gap: 5px; height: 10px; padding-left: 24px; }
.row svg { width: 9px; height: 8px; }
.row .arrow { margin-right: 3px; }
.picked { width: 125px; height: 11px; padding-left: 0; background: #2481dc; color: #0b2a4c; }
.picked .vis { width: 6px; margin-right: 39px; }
.tabs { display: flex; height: 13px; gap: 1px; }
.tab { padding: 0 5px 0 3px; border: 1px solid #3a3a3a; border-top: 0; border-radius: 0 0 2px 2px; background: #2a2a2a; }
.tab.current { background: #343434; }
.tab:not(.current) { padding-left: 7px; }
.split { height: 7px; display: grid; place-items: center; }
.split::before { content: ""; width: 11px; border-top: 1px dotted #777; }
.info { margin: 5px 6px 6px 3px; background: #101010; overflow: hidden; }
.info table { width: 100%; table-layout: fixed; border-collapse: collapse; margin-bottom: 17px; white-space: nowrap; }
.info th { height: 11px; padding: 0 2px; font-weight: 400; text-align: left; background: #383838; border-right: 1px solid #4c4c4c; }
.info th:first-child { width: 96px; }
.info td { height: 8px; padding: 0 0 0 33px; overflow: visible; }
.info td + td { padding-left: 2px; overflow: hidden; }
.info .op td { height: 13px; padding-left: 6px; }
.op span { display: flex; align-items: center; }
.op svg { width: 14px; height: 13px; margin: 0 2px 0 7px; }
.hscroll { display: flex; align-items: center; height: 9px; background: #1c1c1c; }
.hscroll span { flex: 1; height: 8px; margin-right: 24px; border: 1px solid #3e3e3e; background: #2c2c2c; }
.hscroll button { width: 8px; height: 8px; background: #333; display: grid; place-items: center; }
.hscroll button::before { content: ""; border: 2px solid transparent; }
.hscroll .left::before { border-right: 3px solid #ccc; border-left: 0; }
.hscroll .right::before { border-left: 3px solid #ccc; border-right: 0; }
.texts { min-height: 51px; padding-left: 32px; }

.viewer { position: relative; flex: 1; min-width: 0; display: flex; flex-direction: column; border: solid #7b7b7b; border-width: 2px 0 0 2px; }
.viewtitle { height: 15px; line-height: 15px; padding-left: 174px; text-align: center; color: #2b6ea8; border-bottom: 1px solid #4c4c4c; }
.viewbar { flex: none; }
.scene { flex: 1; min-height: 0; background: linear-gradient(#eef3ff, #adc6ff); }
.scene > svg { display: block; width: 100%; height: 100%; }
.axis { font-size: 8px; }
.face { font-size: 6px; fill: #777; }
.callout { position: absolute; padding: 0 8px; border: 4px solid #f24848; border-radius: 1px; background: #fff; color: #111; font-size: 26px; }
.air { left: 281px; top: 25px; width: 63px; height: 63px; line-height: 48px; }
.heatsink { left: 498px; top: 65px; width: 132px; height: 62px; line-height: 46px; }
```
